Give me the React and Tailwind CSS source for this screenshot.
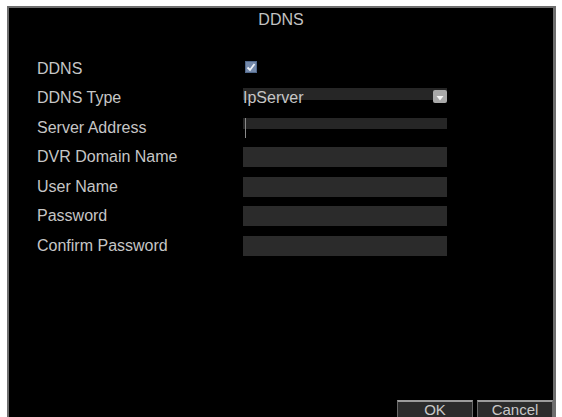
import React from "react";

const fields = [
  { label: "DVR Domain Name" },
  { label: "User Name" },
  { label: "Password" },
  { label: "Confirm Password" },
];

const Row = ({ label, children }) => (
  <div className="flex h-[29.5px] items-center">
    <div className="w-[206px] shrink-0 text-[16px] leading-[18px] text-[#c6c6c6]">{label}</div>
    <div className="w-[204px]">{children}</div>
  </div>
);

const CheckBox = () => (
  <svg width="12" height="12" viewBox="0 0 12 12" className="ml-[2px] -mt-[3px]">
    <rect x="0" y="0" width="12" height="12" fill="#52698c" />
    <rect x="1" y="1" width="10" height="10" fill="#7489aa" />
    <path d="M2.5 6.5 L5 9 L9.5 3" stroke="#eef2f8" strokeWidth="1.8" fill="none" />
  </svg>
);

const DropArrow = () => (
  <svg width="14" height="13" viewBox="0 0 14 13" className="mt-[2px]">
    <rect x="0" y="0" width="14" height="13" rx="2" fill="#a9a9a9" />
    <path d="M3.5 6 L10.5 6 L7 10.5 Z" fill="#f4f4f4" />
  </svg>
);

export default function App() {
  return (
    <div
      className="w-[562px] h-[417px] overflow-hidden bg-white pl-[7px] pr-[6px] pt-[6px]"
      style={{ fontFamily: '"Liberation Sans", Arial, sans-serif' }}
    >
      <div className="flex h-[411px] flex-col overflow-hidden border-l-2 border-r-[3px] border-t-2 border-[#6e6e6e] bg-black">
        <div className="h-[45.75px] pt-[3px] text-center text-[16px] leading-[18px] text-[#c2c2c2]">DDNS</div>

        <div className="pl-[28px]">
          <Row label="DDNS">
            <CheckBox />
          </Row>
          <Row label="DDNS Type">
            <div className="flex h-[20px] items-start justify-between bg-[linear-gradient(to_bottom,#262626_0px,#262626_12px,transparent_12px)]">
              <span className="pt-[1px] text-[16px] leading-[18px] text-[#c6c6c6]">IpServer</span>
              <DropArrow />
            </div>
          </Row>
          <Row label="Server Address">
            <div className="flex h-[20px] bg-[linear-gradient(to_bottom,#262626_0px,#262626_11px,transparent_11px)] pl-[2px]">
              <div className="h-full w-px bg-[#8a8a8a]" />
            </div>
          </Row>
          {fields.map((f) => (
            <Row key={f.label} label={f.label}>
              <div className="h-[20px] bg-[#2b2b2b]" />
            </Row>
          ))}
        </div>

        <div className="flex-1" />

        <div className="flex h-[17px] items-start justify-end gap-[4px]">
          <button className="h-[17px] w-[76px] shrink-0 border-x border-t-2 border-x-[#6a6a6a] border-t-[#9c9c9c] bg-[#2c2c2c] pt-[1px] text-center text-[15px] leading-[14px] text-[#c8c8c8]">
            OK
          </button>
          <button className="h-[17px] w-[76px] shrink-0 border-x border-t-2 border-x-[#6a6a6a] border-t-[#9c9c9c] bg-[#2c2c2c] pt-[1px] text-center text-[15px] leading-[14px] text-[#c8c8c8]">
            Cancel
          </button>
        </div>
      </div>
    </div>
  );
}
